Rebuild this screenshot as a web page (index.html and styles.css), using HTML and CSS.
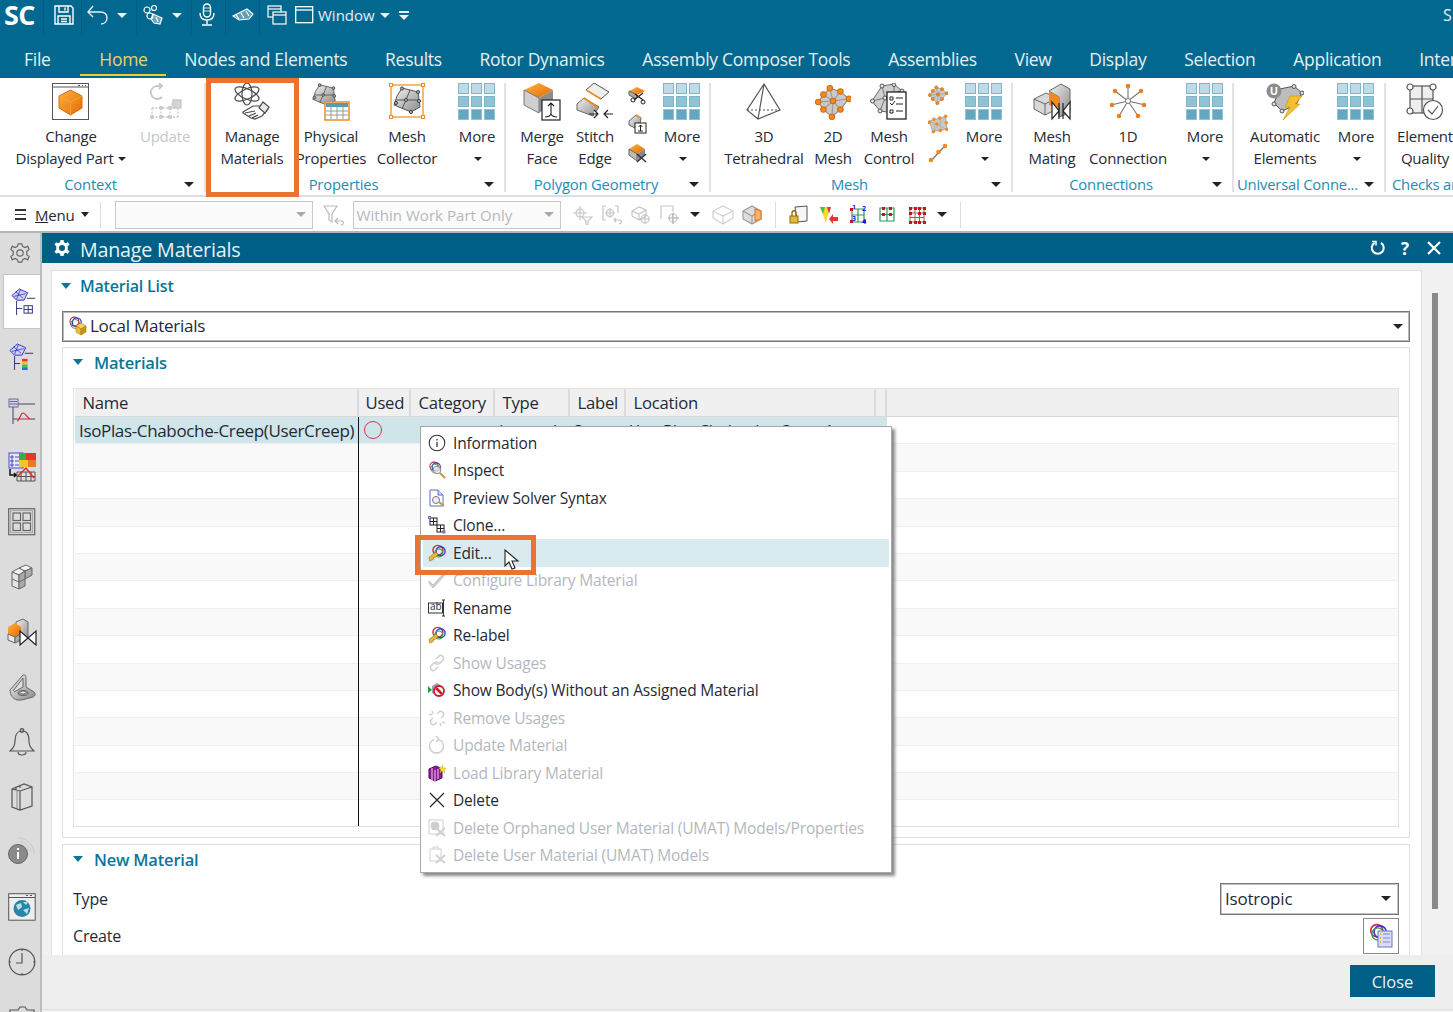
FILE: index.html
```html
<!DOCTYPE html>
<html lang="en">
<head>
<meta charset="utf-8">
<title>Manage Materials</title>
<link rel="stylesheet" href="styles.css">
</head>
<body>
<svg class="defs" aria-hidden="true">
  <defs>
    <linearGradient id="gOr" x1="0" y1="0" x2="1" y2="1"><stop offset="0" stop-color="#fdb23c"/><stop offset="1" stop-color="#e56a05"/></linearGradient>
    <linearGradient id="gGr" x1="0" y1="0" x2="1" y2="1"><stop offset="0" stop-color="#f2f2f2"/><stop offset="1" stop-color="#8a8a8a"/></linearGradient>
    <symbol id="grid" viewBox="0 0 38 38">
      <g fill="#bcdde8" stroke="#7fb7ca"><rect x=".5" y=".5" width="10" height="10"/><rect x="13.5" y=".5" width="10" height="10"/><rect x="26.5" y=".5" width="10" height="10"/></g>
      <g fill="#8fc2d4" stroke="#7fb7ca"><rect x=".5" y="13.5" width="10" height="10"/><rect x="13.5" y="13.5" width="10" height="10"/><rect x="26.5" y="13.5" width="10" height="10"/></g>
      <g fill="#63a8c0" stroke="#8fc2d4"><rect x=".5" y="26.5" width="10" height="10"/><rect x="13.5" y="26.5" width="10" height="10"/><rect x="26.5" y="26.5" width="10" height="10"/></g>
    </symbol>
    <symbol id="patch" viewBox="0 0 28 28">
      <path d="M9 2 25 6 27 21 18 26 1 19 4 10Z" fill="url(#gGr)" stroke="#555"/>
      <path d="M17 4 13 14 9 23M3 14 13 14 26 14" fill="none" stroke="#555"/>
      <g fill="#aaa" stroke="#444"><circle cx="9" cy="2.5" r="1.6"/><circle cx="25" cy="6" r="1.6"/><circle cx="13" cy="14" r="1.6"/><circle cx="26" cy="15" r="1.6"/><circle cx="18" cy="26" r="1.6"/><circle cx="3" cy="17" r="1.6"/></g>
    </symbol>
    <symbol id="orange-mesh" viewBox="0 0 34 34">
      <path d="M14 4 24 7 32 14 24 24 16 31 8 24 3 17 8 10Z" fill="#c9c9c9" stroke="#888"/>
      <path d="M14 4 17 16 16 31M3 17 17 16 32 14M8 10 17 16 24 24M24 7 17 16 8 24" fill="none" stroke="#999"/>
      <g fill="#f08a24" stroke="#d36d0c"><circle cx="14" cy="4" r="2.6"/><circle cx="24" cy="7" r="2.6"/><circle cx="32" cy="14" r="2.6"/><circle cx="24" cy="24" r="2.6"/><circle cx="16" cy="31" r="2.6"/><circle cx="8" cy="24" r="2.6"/><circle cx="3" cy="17" r="2.6"/><circle cx="8" cy="10" r="2.6"/><circle cx="17" cy="16" r="2.6"/></g>
    </symbol>
    <symbol id="tree-blue" viewBox="0 0 28 32">
      <path d="M1 9 9 2 18 6 14 14 6 14Z" fill="#cfd2f2" stroke="#2b2bc4"/>
      <path d="M5 5 13 12M10 3 6 13M3 10 16 7" stroke="#2b2bc4" fill="none" stroke-width=".8"/>
      <path d="M17 12H26M6 15V30M6 23H12" stroke="#2a2a6a" fill="none"/>
    </symbol>
    <symbol id="rings" viewBox="0 0 20 20">
      <circle cx="8" cy="7" r="5.5" fill="none" stroke="#c0304a" stroke-width="1.5"/>
      <circle cx="11" cy="8" r="5.5" fill="none" stroke="#3232c8" stroke-width="1.5"/>
      <circle cx="9" cy="10" r="5.5" fill="none" stroke="#3a9a4a" stroke-width="1.2"/>
    </symbol>
    <symbol id="key-rings" viewBox="0 0 20 20">
      <circle cx="11" cy="7" r="5.500" fill="none" stroke="#c0304a" stroke-width="1.600"/>
      <circle cx="14" cy="8" r="5" fill="none" stroke="#3232c8" stroke-width="1.500"/>
      <circle cx="12" cy="10" r="4.500" fill="none" stroke="#3a9a4a" stroke-width="1.200"/>
      <path d="M9 9 1 15 2 19 6 17 6 15 8 15 11 12Z" fill="#e8b83a" stroke="#9a7410" stroke-width=".7"/>
    </symbol>
  </defs>
</svg>

<div class="app">
  <header class="appbar">
    <div class="quick">
      <strong class="logo">SC</strong>
      <span class="qs"></span>
      <span class="q q-save"><svg width="22" height="22" viewBox="0 0 22 22" fill="none" stroke="#fff" stroke-width="1.4"><path d="M2 2H18L20 4V20H2Z"/><path d="M6 2V8H15V2M12 3.5V6.5M5 20V12H17V20M8 15H14M8 17.5H14"/></svg></span>
      <span class="qs"></span>
      <span class="q q-undo"><svg width="22" height="22" viewBox="0 0 22 22" fill="none" stroke="#e6f0f4" stroke-width="1.4"><path d="M1 8H13C18 8 20 11 20 14S18 20 14 20"/><path d="M6 2 1 8 6 13"/></svg></span>
      <i class="caret caret-w q-c1"></i>
      <span class="qs q-s2"></span>
      <span class="q q-tool"><svg width="22" height="22" viewBox="0 0 22 22" fill="none" stroke="#fff" stroke-width="1.2"><circle cx="5" cy="6" r="3"/><circle cx="12" cy="4" r="2.5"/><circle cx="8" cy="12" r="3"/><path d="M11 10 20 14 18 20 12 19 9 15Z" fill="#cfe0e8" fill-opacity=".5"/><path d="M14 13 16 18"/></svg></span>
      <i class="caret caret-w q-c1"></i>
      <span class="qs q-s3"></span>
      <span class="q q-mic"><svg width="18" height="24" viewBox="0 0 18 24" fill="none" stroke="#fff" stroke-width="1.4"><rect x="5.5" y="1" width="7" height="13" rx="3.5"/><path d="M2 10C2 15 5 17 9 17S16 15 16 10M9 17V21M4 22H14"/><path d="M6 5H12M6 8H12" stroke-width=".8"/></svg></span>
      <span class="qs q-s4"></span>
      <span class="q q-voice"><svg width="22" height="18" viewBox="0 0 22 18" fill="none" stroke="#fff" stroke-width="1.2"><path d="M1 10 15 3 21 8 17 13 7 14Z" fill="#bcd4de" fill-opacity=".5"/><path d="M9 7 12 12M14 5 17 10M4 9 7 13"/></svg></span>
      <span class="qs q-s5"></span>
      <span class="q q-win2"><svg width="20" height="20" viewBox="0 0 20 20" fill="none" stroke="#fff" stroke-width="1.2"><rect x="1" y="1" width="13" height="11" fill="#03688f"/><path d="M1 4H14"/><rect x="6" y="7" width="13" height="12" fill="#03688f"/><path d="M6 10H19"/></svg></span>
      <span class="q q-win"><svg width="19" height="18" viewBox="0 0 19 18" fill="none" stroke="#fff" stroke-width="1.3"><rect x=".7" y=".7" width="17" height="16"/><path d="M1 4H18"/></svg></span>
      <span class="q-label">Window</span>
      <i class="caret caret-w q-c2"></i>
      <span class="q-more"><i class="q-bar"></i><i class="caret caret-w"></i></span>
      <span class="q-end">S</span>
    </div>
    <nav class="tabs">
      <span class="tab">File</span>
      <span class="tab tab-on">Home</span>
      <span class="tab">Nodes and Elements</span>
      <span class="tab">Results</span>
      <span class="tab">Rotor Dynamics</span>
      <span class="tab">Assembly Composer Tools</span>
      <span class="tab">Assemblies</span>
      <span class="tab">View</span>
      <span class="tab">Display</span>
      <span class="tab">Selection</span>
      <span class="tab">Application</span>
      <span class="tab">Interop</span>
    </nav>
  </header>

  <section class="ribbon">
    <div class="group g-context">
      <div class="cols">
        <div class="tool">
          <svg class="ico" width="38" height="38" viewBox="0 0 38 38"><rect x=".5" y=".5" width="36" height="36" fill="#fff" stroke="#555"/><path d="M1 4H36" stroke="#555"/><path d="M26 2.5h2M30 2.5h1M33 2.5h1" stroke="#555"/><path d="M18.500 7 30 13V25L18.500 32 7 25V13Z" fill="url(#gOr)" stroke="#d9700e"/><path d="M7 13 18.500 19 30 13M18.500 19V32" fill="none" stroke="#f5a13a"/></svg>
          <span class="tool-l">Change<br>Displayed Part <i class="caret"></i></span>
        </div>
        <div class="tool off">
          <svg class="ico" width="38" height="38" viewBox="0 0 38 38" fill="none" stroke="#c8c8c8" stroke-width="1.3"><path d="M16 14A6.500 6.500 0 1 1 12 3L16 3M13 0 16 3 13 6" stroke-width="1.800"/><path d="M6 25H32M6 34H32M6 25V34M15 25V34M24 25V34M32 18V34M24 25 28 17H34" stroke-dasharray="2 1.500"/><g fill="#d5d5d5"><circle cx="15" cy="25" r="1.500"/><circle cx="24" cy="25" r="1.500"/><circle cx="6" cy="34" r="1.500"/><circle cx="15" cy="34" r="1.500"/><circle cx="24" cy="34" r="1.500"/><rect x="27" y="17" width="8" height="8"/></g></svg>
          <span class="tool-l">Update</span>
        </div>
      </div>
      <div class="foot"><span class="foot-l">Context</span><i class="caret foot-c"></i></div>
    </div>

    <div class="group g-props">
      <div class="cols">
        <div class="tool">
          <svg class="ico" width="38" height="38" viewBox="0 0 38 38" fill="none" stroke="#4a4a4a" stroke-width="1.200"><ellipse cx="14" cy="11" rx="13" ry="5" transform="rotate(25 14 11)"/><ellipse cx="14" cy="11" rx="13" ry="5" transform="rotate(-25 14 11)"/><ellipse cx="14" cy="11" rx="5" ry="11"/><path d="M10 29 20 23 27 23 31 20 35 26 29 33 22 36 18 35 10 30Z" fill="#fff"/><path d="M30 19 36 24 32 30 26 25Z" fill="#e8e8e8"/><path d="M12 30 22 28M16 33 23 30M19 35 25 32"/></svg>
          <span class="tool-l">Manage<br>Materials</span>
        </div>
        <div class="tool">
          <svg class="ico ico-wide" width="38" height="38" viewBox="0 0 38 38"><use href="#patch" x="0" y="0" width="24" height="24"/><rect x="13" y="19" width="24" height="18" fill="#fff" stroke="#f08a24" stroke-width="1.500"/><rect x="14" y="20" width="22" height="4" fill="#5a9ab4"/><path d="M14 28H36M14 32H36M19 24V36M25 24V36M31 24V36" stroke="#999"/></svg>
          <span class="tool-l">Physical<br>Properties</span>
        </div>
        <div class="tool">
          <svg class="ico" width="36" height="38" viewBox="0 0 36 38"><rect x="2" y="2" width="32" height="32" fill="none" stroke="#f08a24" stroke-width="1.200"/><g fill="#fff" stroke="#f08a24"><rect x=".5" y=".5" width="3" height="3"/><rect x="32.500" y=".5" width="3" height="3"/><rect x=".5" y="32.500" width="3" height="3"/><rect x="32.500" y="32.500" width="3" height="3"/></g><use href="#patch" x="4" y="3" width="28" height="28"/></svg>
          <span class="tool-l">Mesh<br>Collector</span>
        </div>
        <div class="tool"><svg class="ico" width="38" height="38"><use href="#grid"/></svg><span class="tool-l">More<br><i class="caret"></i></span></div>
      </div>
      <div class="foot"><span class="foot-l">Properties</span><i class="caret foot-c"></i></div>
    </div>

    <div class="group g-poly">
      <div class="cols">
        <div class="tool">
          <svg class="ico" width="38" height="38" viewBox="0 0 38 38"><path d="M16 0 30 7 16 15 1 7Z" fill="url(#gOr)"/><path d="M1 7 16 15V30L1 22Z" fill="#cfcfcf" stroke="#777"/><path d="M16 15 30 7V18L16 30Z" fill="#8d8d8d"/><rect x="19" y="17" width="18" height="20" fill="#fff" stroke="#222" stroke-width="1.200"/><path d="M28 20V31M25 23 28 20 31 23M22 34C25 34 27 33 28 31 29 33 31 34 34 34" fill="none" stroke="#222" stroke-width="1.100"/></svg>
          <span class="tool-l">Merge<br>Face</span>
        </div>
        <div class="tool">
          <svg class="ico" width="38" height="38" viewBox="0 0 38 38"><path d="M10 7 18 0 33 9 25 16Z" fill="#efefef" stroke="#555"/><path d="M10 7 25 16" stroke="#f08a24" stroke-width="1.500"/><path d="M1 21 8 15 23 24 17 33 1 27Z" fill="url(#gGr)" stroke="#666"/><path d="M8 15 21 24" stroke="#f08a24" stroke-width="2"/><path d="M13 31H21M18 27 22 31 18 35M37 31H29M32 27 28 31 32 35" fill="#fff" stroke="#222" stroke-width="1.200"/></svg>
          <span class="tool-l">Stitch<br>Edge</span>
        </div>
        <div class="tool mini-col">
          <svg width="20" height="20" viewBox="0 0 20 20"><path d="M2 6 10 2 18 6 10 10Z" fill="url(#gOr)"/><path d="M2 6 10 10 9 14 2 10Z" fill="#aaa" stroke="#666"/><path d="M8 9 16 15M16 8 7 15" stroke="#222" stroke-width="1.200"/><circle cx="6" cy="15" r="2" fill="none" stroke="#222"/><circle cx="16" cy="17" r="2" fill="none" stroke="#222"/></svg>
          <svg width="20" height="20" viewBox="0 0 20 20"><path d="M2 7 9 1 14 4 12 16 2 11Z" fill="url(#gGr)" stroke="#666"/><path d="M9 1 14 4" stroke="#f08a24" stroke-width="2"/><rect x="8" y="9" width="11" height="10" fill="#fff" stroke="#222"/><path d="M13.500 11V17M11 17H16M11.500 13 13.500 11 15.500 13" fill="none" stroke="#222"/></svg>
          <svg width="20" height="20" viewBox="0 0 20 20"><path d="M2 6 10 1 18 6 10 11Z" fill="url(#gOr)"/><path d="M2 6 10 11V18L2 12Z" fill="#bbb" stroke="#666"/><path d="M10 11 18 6V12L10 18Z" fill="#888"/><path d="M10 11 19 19M19 11 10 19" stroke="#333" stroke-width="1.500"/></svg>
        </div>
        <div class="tool"><svg class="ico" width="38" height="38"><use href="#grid"/></svg><span class="tool-l">More<br><i class="caret"></i></span></div>
      </div>
      <div class="foot"><span class="foot-l">Polygon Geometry</span><i class="caret foot-c"></i></div>
    </div>

    <div class="group g-mesh">
      <div class="cols">
        <div class="tool">
          <svg class="ico" width="38" height="38" viewBox="0 0 38 38" fill="none" stroke="#555" stroke-width="1.200"><path d="M19 1 2 27 13 36 35 27ZM19 1 13 36"/><path d="M2 27H35" stroke-dasharray="2 2"/></svg>
          <span class="tool-l">3D<br>Tetrahedral</span>
        </div>
        <div class="tool"><svg class="ico" width="36" height="38"><use href="#orange-mesh"/></svg><span class="tool-l">2D<br>Mesh</span></div>
        <div class="tool">
          <svg class="ico" width="38" height="38" viewBox="0 0 38 38"><path d="M12 3 24 1 32 8 24 30 10 28 2 18Z" fill="#cfcfcf" stroke="#666"/><path d="M12 3 15 15 10 28M2 18 15 15 24 10M24 1 24 10 32 8" fill="none" stroke="#777"/><g fill="#e5e5e5" stroke="#555"><circle cx="12" cy="3" r="2"/><circle cx="24" cy="1.800" r="1.800"/><circle cx="32" cy="8" r="2"/><circle cx="2.500" cy="18" r="2"/><circle cx="15" cy="15" r="2"/><circle cx="10" cy="28" r="2"/></g><rect x="17" y="9" width="19" height="27" fill="#fff" stroke="#222" stroke-width="1.300"/><path d="M20 14h3v3h-3zM20 20l2 2 3-4M20 27h3v3h-3zM26 15H33M26 21H33M26 28H33" fill="none" stroke="#222"/></svg>
          <span class="tool-l">Mesh<br>Control</span>
        </div>
        <div class="tool mini-col">
          <svg width="20" height="20"><use href="#orange-mesh"/></svg>
          <svg width="20" height="20" viewBox="0 0 34 34"><path d="M2 12 30 4 32 26 8 30Z" fill="#c9c9c9" stroke="#888"/><path d="M2 12 32 26M10 9 12 30M20 7 22 28M30 4 8 30" stroke="#aaa"/><g fill="#f08a24"><circle cx="2" cy="14" r="3"/><circle cx="10" cy="9" r="3"/><circle cx="20" cy="7" r="3"/><circle cx="30" cy="4" r="3"/><circle cx="31" cy="15" r="3"/><circle cx="32" cy="26" r="3"/><circle cx="21" cy="28" r="3"/><circle cx="9" cy="30" r="3"/><circle cx="15" cy="17" r="3"/></g></svg>
          <svg width="20" height="20" viewBox="0 0 20 20"><path d="M3 18 11 9 17 3" stroke="#777" stroke-width="1.300"/><g fill="#f08a24"><circle cx="3" cy="17" r="2.300"/><circle cx="10.500" cy="9" r="2.300"/><circle cx="17" cy="3" r="2.300"/></g></svg>
        </div>
        <div class="tool"><svg class="ico" width="38" height="38"><use href="#grid"/></svg><span class="tool-l">More<br><i class="caret"></i></span></div>
      </div>
      <div class="foot"><span class="foot-l">Mesh</span><i class="caret foot-c"></i></div>
    </div>

    <div class="group g-conn">
      <div class="cols">
        <div class="tool">
          <svg class="ico" width="38" height="38" viewBox="0 0 38 38"><path d="M1 16 13 10 24 15V26L12 32 1 26Z" fill="#d8d8d8" stroke="#666"/><path d="M1 16 12 21V32M12 21 24 15" fill="none" stroke="#666"/><path d="M16 8 28 1 37 6V30L26 34 26 14Z" fill="url(#gGr)" stroke="#666"/><path d="M16 8 26 14V26L16 22Z" fill="#f08a24"/><path d="M19 19V36L26 28ZM37 19V36L30 28ZM26 20V36M30 20V36" fill="#fff" stroke="#222" stroke-width="1.200"/></svg>
          <span class="tool-l">Mesh<br>Mating</span>
        </div>
        <div class="tool">
          <svg class="ico" width="36" height="38" viewBox="0 0 36 38"><path d="M18 18 18 3M18 18 5 8M18 18 31 8M18 18 1 22M18 18 35 22M18 18 9 33M18 18 28 33" stroke="#777" stroke-width="1.100"/><circle cx="18" cy="18" r="2.500" fill="#fff" stroke="#777"/><g fill="#f07f1a"><circle cx="18" cy="3" r="2.300"/><circle cx="5" cy="8" r="2.300"/><circle cx="31" cy="8" r="2.300"/><circle cx="2" cy="22" r="2.300"/><circle cx="34" cy="22" r="2.300"/><circle cx="9" cy="33" r="2.300"/><circle cx="28" cy="33" r="2.300"/></g></svg>
          <span class="tool-l">1D<br>Connection</span>
        </div>
        <div class="tool"><svg class="ico" width="38" height="38"><use href="#grid"/></svg><span class="tool-l">More<br><i class="caret"></i></span></div>
      </div>
      <div class="foot"><span class="foot-l">Connections</span><i class="caret foot-c"></i></div>
    </div>

    <div class="group g-univ">
      <div class="cols">
        <div class="tool">
          <svg class="ico" width="38" height="38" viewBox="0 0 38 38"><path d="M14 6 28 3 36 10 30 22 16 28 8 20Z" fill="#bdbdbd" stroke="#555"/><g fill="#ddd" stroke="#555"><circle cx="28" cy="3.500" r="2"/><circle cx="36" cy="10" r="2"/><circle cx="16" cy="28" r="2"/><circle cx="8" cy="21" r="2"/></g><circle cx="8" cy="8" r="7.500" fill="#8c8c8c"/><text x="8" y="12" class="svg-u">U</text><path d="M24 13H36L29 21H34L17 37 24 24H19Z" fill="#f5c02e" stroke="#c89410" stroke-width=".6"/></svg>
          <span class="tool-l">Automatic<br>Elements</span>
        </div>
        <div class="tool"><svg class="ico" width="38" height="38"><use href="#grid"/></svg><span class="tool-l">More<br><i class="caret"></i></span></div>
      </div>
      <div class="foot"><span class="foot-l">Universal Conne...</span><i class="caret foot-c"></i></div>
    </div>

    <div class="group g-check">
      <div class="cols">
        <div class="tool">
          <svg class="ico" width="38" height="38" viewBox="0 0 38 38" fill="none" stroke="#555" stroke-width="1.200"><rect x="4" y="3" width="23" height="27" fill="#eee"/><path d="M4 16H27M16 3V30"/><g fill="#fff"><circle cx="4" cy="4" r="3"/><circle cx="27" cy="4" r="3"/><circle cx="4" cy="28" r="3"/></g><circle cx="27" cy="27" r="9.500" fill="#fff"/><path d="M22 27 26 31 32 23"/></svg>
          <span class="tool-l">Element<br>Quality</span>
        </div>
      </div>
      <div class="foot"><span class="foot-l">Checks and Info</span></div>
    </div>
  </section>

  <section class="toolbar">
    <span class="burger"><i></i><i></i><i></i></span>
    <span class="menu-btn"><u>M</u>enu</span>
    <i class="caret tb-c1"></i>
    <span class="tb-sep tb-sep1"></span>
    <span class="tb-combo tb-combo1"><i class="caret caret-g"></i></span>
    <svg class="tb-filter" width="22" height="22" viewBox="0 0 22 22" fill="none" stroke="#bbb" stroke-width="1.200"><path d="M1 2H14L9 10V18L6 16V10Z"/><path d="M12 17H19C21 17 21 21 18 21M15 14 12 17 15 20"/></svg>
    <span class="tb-combo tb-combo2"><span>Within Work Part Only</span><i class="caret caret-g"></i></span>
    <span class="tb-icons tb-i1">
      <svg width="20" height="20" viewBox="0 0 20 20" fill="none" stroke="#c6c6c6" stroke-width="1.200"><circle cx="7" cy="8" r="4"/><path d="M7 1V15M0 8H14M9 12H19L15 16V20L13 19V16Z"/></svg>
      <svg width="20" height="20" viewBox="0 0 20 20" fill="none" stroke="#c6c6c6" stroke-width="1.200"><path d="M4 1H1V15H4M13 1H16V8"/><circle cx="8" cy="8" r="3.500"/><path d="M8 3V13M3 8H13M12 15H18C20 15 20 19 17 19M14 13 12 15 14 17"/></svg>
      <svg width="20" height="20" viewBox="0 0 20 20" fill="none" stroke="#c6c6c6" stroke-width="1.200"><path d="M1 6 8 2 15 5V11L8 15 1 11ZM1 6 8 9 15 5M8 9V15"/><circle cx="14" cy="14" r="4"/><path d="M14 9V19M9 14H19"/></svg>
      <svg width="20" height="20" viewBox="0 0 20 20" fill="none" stroke="#c6c6c6" stroke-width="1.200"><path d="M13 1H1V14"/><path d="M13 1V7"/><circle cx="13" cy="13" r="4"/><path d="M13 8V19M8 13H19" stroke="#a8a8a8"/></svg>
    </span>
    <i class="caret tb-c2"></i>
    <span class="tb-icons tb-i2">
      <svg width="22" height="20" viewBox="0 0 22 20" fill="none" stroke="#d0d0d0" stroke-width="1.200"><path d="M1 6 11 1 21 6V13L11 19 1 13ZM1 6 11 11 21 6M11 11V19"/></svg>
      <svg width="20" height="20" viewBox="0 0 20 20" fill="none" stroke="#999" stroke-width="1.100"><path d="M1 6 10 1 19 6V14L10 19 1 14Z" fill="#ddd"/><path d="M1 6 10 11V19M10 11 19 6"/><path d="M13 4V16L19 14V6Z" fill="#f3b07a" stroke="#e07a22"/></svg>
    </span>
    <span class="tb-sep tb-sep2"></span>
    <span class="tb-icons tb-i3">
      <svg width="20" height="20" viewBox="0 0 20 20"><path d="M6 2 18 1V16L8 17Z" fill="#f6f6f6" stroke="#555"/><rect x="1" y="11" width="8" height="7" fill="#e6b93a" stroke="#8e6a10"/><path d="M3 11V8C3 5 7 5 7 8V11" fill="none" stroke="#8e6a10" stroke-width="1.300"/></svg>
      <svg width="20" height="20" viewBox="0 0 20 20"><path d="M2 2H12L8 18Z" fill="#f6d92a"/><path d="M2 2H7L5 9Z" fill="#3fbf5a"/><path d="M9 2H13L11 9Z" fill="#e2382d"/><path d="M11 14 15 9 15 12H20V16H15V19Z" fill="#e2382d"/></svg>
      <svg width="20" height="20" viewBox="0 0 20 20"><path d="M4 4H16V17H4ZM10 4V17M4 10H16" fill="none" stroke="#2a9a5a" stroke-width="1.200"/><g fill="#c4161c"><rect x="2" y="3" width="3" height="3"/><rect x="2" y="15" width="3" height="3"/><rect x="15" y="15" width="3" height="3"/></g><text x="6" y="4" class="svg-n">1</text><text x="16" y="6" class="svg-n">2</text><text x="6" y="16" class="svg-n">3</text><text x="16" y="19" class="svg-n">4</text></svg>
      <svg width="20" height="20" viewBox="0 0 20 20"><path d="M3 3H17V16H3ZM10 3V16M3 9.500H17" fill="none" stroke="#2a9a5a" stroke-width="1.200"/><g fill="#c4161c"><rect x="5" y="2" width="3" height="3"/><rect x="12" y="2" width="3" height="3"/><rect x="5" y="8" width="3" height="3"/><rect x="12" y="8" width="3" height="3"/></g></svg>
      <svg width="20" height="20" viewBox="0 0 20 20"><path d="M3 3H17V17H3ZM8 3V17M12.500 3V17M3 8H17M3 12.500H17" fill="none" stroke="#a05a5a" stroke-width="1"/><g fill="#c4161c"><rect x="2" y="2" width="3" height="3"/><rect x="7" y="2" width="3" height="3"/><rect x="11" y="2" width="3" height="3"/><rect x="16" y="2" width="3" height="3"/><rect x="2" y="7" width="3" height="3"/><rect x="11" y="7" width="3" height="3"/><rect x="16" y="7" width="3" height="3"/><rect x="2" y="16" width="3" height="3"/><rect x="7" y="16" width="3" height="3"/><rect x="11" y="16" width="3" height="3"/><rect x="16" y="16" width="3" height="3"/></g></svg>
    </span>
    <i class="caret tb-c3"></i>
    <span class="tb-sep tb-sep3"></span>
  </section>

  <main class="workspace">
    <aside class="rail">
      <span class="rail-top"><svg width="20" height="20" viewBox="0 0 22 22" fill="none" stroke="#666" stroke-width="1.300"><path d="M9 1H13L14 4 16.500 5 19.500 3.500 21 7 18.500 9V13L21 15 19.500 18.500 16.500 17 14 18 13 21H9L8 18 5.500 17 2.500 18.500 1 15 3.500 13V9L1 7 2.500 3.500 5.500 5 8 4Z"/><circle cx="11" cy="11" r="3.500"/></svg></span>
      <span class="rail-i rail-on"><svg width="26" height="30" viewBox="0 0 28 32"><use href="#tree-blue"/><rect x="14" y="20" width="9" height="8" fill="none" stroke="#2a2a8a"/><path d="M18.500 20V28M14 24H23" stroke="#2a2a8a"/></svg></span>
      <span class="rail-i"><svg width="26" height="30" viewBox="0 0 28 32"><use href="#tree-blue"/><rect x="14" y="18" width="6" height="3" fill="#e2382d"/><rect x="14" y="21" width="6" height="3" fill="#f6c52a"/><rect x="14" y="24" width="6" height="3" fill="#3fbf5a"/><rect x="14" y="27" width="6" height="3" fill="#2a6ee2"/></svg></span>
      <span class="rail-i"><svg width="28" height="28" viewBox="0 0 28 28" fill="none"><rect x="1" y="1" width="9" height="8" fill="#cfd2e6" stroke="#6a6aa0"/><path d="M2 3.500H9M2 6H9" stroke="#6a6aa0"/><path d="M5 9V26M10 6H27M5 21H9M23 21H27" stroke="#444466"/><path d="M9 23C12 23 12 15 15 15S19 21 23 21H9" stroke="#c0303a" stroke-width="1.200"/></svg></span>
      <span class="rail-i"><svg width="28" height="30" viewBox="0 0 28 30"><rect x="1" y="1" width="14" height="15" fill="#e6e8f8" stroke="#4a4ac8"/><path d="M3 4h2v2h-2zM3 8h2v2h-2zM3 12h2v2h-2zM7 5H13M7 9H13M7 13H13" fill="none" stroke="#4a4ac8"/><path d="M11 1H18V8H11Z" fill="#3fa84a"/><path d="M18 1H28V8H18Z" fill="#e2382d"/><path d="M11 8H20V15H11Z" fill="#f2c52a"/><path d="M20 8H28V15H20Z" fill="#ea7a24"/><path d="M9 20H27V29H9ZM13 20V29M18 20V29M23 20V29M9 24.500H27" fill="none" stroke="#555"/><path d="M10 24 18 16 26 26" fill="none" stroke="#e2282d" stroke-width="1.500"/><path d="M2 17V23H8M6 21 8 23 6 25" fill="none" stroke="#111" stroke-width="1.500"/></svg></span>
      <span class="rail-i"><svg width="28" height="28" viewBox="0 0 28 28" fill="none" stroke="#666" stroke-width="1.200"><rect x=".7" y=".7" width="26" height="26"/><rect x="2.500" y="2.500" width="22" height="22" stroke="#aaa"/><rect x="5" y="5" width="7.500" height="7.500"/><rect x="15" y="5" width="7.500" height="7.500"/><rect x="5" y="15" width="7.500" height="7.500"/><rect x="15" y="15" width="7.500" height="7.500"/></svg></span>
      <span class="rail-i"><svg width="22" height="26" viewBox="0 0 22 26" stroke="#666"><path d="M1 8 8 4 14 7 8 11Z" fill="#f0f0f0"/><path d="M8 4 15 1 21 4 14 7Z" fill="#f5f5f5"/><path d="M14 7 21 4V11L14 15Z" fill="#aaa"/><path d="M1 8 8 11V25L1 22Z" fill="#e5e5e5"/><path d="M8 11 14 7V22L8 25Z" fill="#aaa"/><path d="M1 15 8 18 14 15" fill="none"/></svg></span>
      <span class="rail-i"><svg width="30" height="28" viewBox="0 0 30 28"><path d="M9 4 16 1 21 4V20L15 23 9 20Z" fill="url(#gGr)" stroke="#666"/><path d="M1 9 8 5 14 9V16L8 19 1 16Z" fill="url(#gOr)"/><path d="M1 16 8 19V25L1 22Z" fill="#e8e8e8" stroke="#666"/><path d="M8 19 14 16V22L8 25Z" fill="#aaa" stroke="#666"/><path d="M13 13V27L21 20ZM29 13V27L21 20Z" fill="#fff" stroke="#222" stroke-width="1.200"/></svg></span>
      <span class="rail-i"><svg width="28" height="28" viewBox="0 0 28 28" stroke="#666"><path d="M2 17 15 2C17 1 18 3 18 5V14L26 19C28 21 27 23 25 24L14 27H9C5 26 2 22 2 17Z" fill="url(#gGr)"/><path d="M5 18 15 5V14L6 19" fill="#ddd"/><ellipse cx="15" cy="20" rx="5" ry="2.500" fill="#999"/><ellipse cx="15" cy="19.500" rx="3" ry="1.500" fill="#eee"/></svg></span>
      <span class="rail-i"><svg width="26" height="28" viewBox="0 0 26 28" fill="none" stroke="#555" stroke-width="1.200"><path d="M13 3C7 3 6 8 6 13S4 20 1 23H25C22 20 20 18 20 13S19 3 13 3Z"/><circle cx="13" cy="2.500" r="1.800"/><path d="M9 24C9 28 17 28 17 24"/></svg></span>
      <span class="rail-i"><svg width="22" height="28" viewBox="0 0 22 28" fill="none" stroke="#555" stroke-width="1.200"><path d="M1 6 13 1 21 4V23L9 27 1 24ZM9 8V27M1 6 9 8 21 4M5 3.500 5 7M9 2 9 5"/><path d="M6 7V25" stroke="#999"/></svg></span>
      <span class="rail-i"><svg width="28" height="30" viewBox="0 0 28 30"><circle cx="10" cy="17" r="9.500" fill="#8a8a8a" stroke="#666"/><path d="M10 15V22M10 11V13" stroke="#fff" stroke-width="2"/><path d="M11 1C18 1 26 8 26 16M12 4C17 5 23 10 23 15M13 7C16 8 20 11 20 14" fill="none" stroke="#c8c8c8"/></svg></span>
      <span class="rail-i"><svg width="28" height="28" viewBox="0 0 28 28"><rect x=".7" y=".7" width="26.500" height="26.500" fill="#eee" stroke="#555"/><path d="M1 4.500H27M18 2.500h2M22 2.500h2" stroke="#555"/><circle cx="14" cy="15.500" r="8.500" fill="#2a86a8"/><path d="M8 12 13 10 14 14 10 17ZM15 17 21 15 19 21ZM15 9H20L18 12Z" fill="#bfe0ea"/></svg></span>
      <span class="rail-i"><svg width="28" height="28" viewBox="0 0 28 28" fill="none" stroke="#555" stroke-width="1.200"><circle cx="14" cy="14" r="12.800"/><path d="M14 5V15H8M14 1V3M14 25V27M1 14H3M25 14H27"/></svg></span>
      <span class="rail-i"><svg width="26" height="24" viewBox="0 0 26 24" fill="none" stroke="#555" stroke-width="1.200"><path d="M1 5H9L11 2H16L18 5H25V23H1ZM10 12H17M13.500 9V16"/></svg></span>
    </aside>

    <section class="dialog">
      <header class="dlg-head">
        <svg class="dlg-gear" width="16" height="16" viewBox="0 0 16 16"><path fill="#fff" fill-rule="evenodd" d="M6.500 0H9.500L10 2.300 11.800 3.200 14 2.200 15.500 4.800 13.700 6.300V9.700L15.500 11.200 14 13.800 11.800 12.800 10 13.700 9.500 16H6.500L6 13.700 4.200 12.800 2 13.800.5 11.200 2.300 9.700V6.300L.5 4.800 2 2.200 4.200 3.200 6 2.300ZM8 5A3 3 0 1 0 8 11 3 3 0 1 0 8 5Z"/></svg>
        <h1 class="dlg-title">Manage Materials</h1>
        <span class="dlg-actions">
          <svg width="16" height="16" viewBox="0 0 16 16" fill="none" stroke="#fff" stroke-width="2"><path d="M4.500 2.800A6 6 0 1 0 11 2.800"/><path d="M2 1.500H6V5.500" stroke-width="1.500"/></svg>
          <span class="help">?</span>
          <svg width="14" height="14" viewBox="0 0 14 14" stroke="#fff" stroke-width="2.200"><path d="M1 1 13 13M13 1 1 13"/></svg>
        </span>
      </header>
      <div class="dlg-body">
        <div class="scroll-area">
          <div class="outer">
            <h2 class="sec-h sec-h1"><i class="tri"></i>Material List</h2>
            <div class="list-combo">
              <svg width="20" height="20" viewBox="0 0 20 20"><use href="#rings" width="16" height="16"/><path d="M8 10 13 7 18 10 13 13Z" fill="#f7d45e" stroke="#a57f14" stroke-width=".6"/><path d="M8 10 13 13V19L8 16Z" fill="#f0bc35" stroke="#a57f14" stroke-width=".6"/><path d="M13 13 18 10V16L13 19Z" fill="#c89418" stroke="#a57f14" stroke-width=".6"/></svg>
              <span class="list-combo-t">Local Materials</span>
              <i class="caret"></i>
            </div>
            <div class="panel panel-mat">
              <h2 class="sec-h sec-h2"><i class="tri"></i>Materials</h2>
              <div class="table">
                <div class="t-row t-head">
                  <span>Name</span><span>Used</span><span>Category</span><span>Type</span><span>Label</span><span>Location</span><span></span><span></span>
                </div>
                <div class="t-row t-sel"><span>IsoPlas-Chaboche-Creep(UserCreep)</span><span><i class="used"></i></span><span></span><span>Isotropic</span><span>3</span><span>\Iso-Plas-Chaboche-Creep1</span><span></span></div>
                <div class="t-row"><span></span></div><div class="t-row"><span></span></div><div class="t-row"><span></span></div><div class="t-row"><span></span></div>
                <div class="t-row"><span></span></div><div class="t-row"><span></span></div><div class="t-row"><span></span></div><div class="t-row"><span></span></div>
                <div class="t-row"><span></span></div><div class="t-row"><span></span></div><div class="t-row"><span></span></div><div class="t-row"><span></span></div>
                <div class="t-row"><span></span></div><div class="t-row"><span></span></div>
              </div>
            </div>
            <div class="panel panel-new">
              <h2 class="sec-h sec-h2"><i class="tri"></i>New Material</h2>
              <div class="form-row form-type"><span>Type</span><span class="type-combo"><span>Isotropic</span><i class="caret"></i></span></div>
              <div class="form-row form-create"><span>Create</span>
                <span class="create-btn"><svg width="28" height="28" viewBox="0 0 28 28"><use href="#rings" width="22" height="22" x="1" y="1"/><rect x="11" y="9" width="14" height="16" fill="#d8dcf8" stroke="#6a74c0"/><path d="M13 12h1M13 16h1M13 20h1" stroke="#e0b020" stroke-width="2"/><path d="M16 12H23M16 16H23M16 20H23" stroke="#8088c8"/></svg></span>
              </div>
            </div>
          </div>
          <div class="scrollbar"><i></i></div>
        </div>
        <footer class="dlg-foot"><span class="close-btn">Close</span></footer>
      </div>
    </section>
  </main>
</div>

<div class="context-menu">
  <div class="mi"><svg width="18" height="18" viewBox="0 0 18 18" fill="none" stroke="#333" stroke-width="1.100"><circle cx="9" cy="9" r="7.800"/><path d="M9 8V13M9 5V6.500" stroke-width="1.300"/></svg><span>Information</span></div>
  <div class="mi"><svg width="18" height="18" viewBox="0 0 18 18"><use href="#rings" width="15" height="15"/><circle cx="9" cy="9" r="3.800" fill="#eef" fill-opacity=".7" stroke="#888"/><path d="M12 12 17 17" stroke="#c09a40" stroke-width="2"/></svg><span>Inspect</span></div>
  <div class="mi"><svg width="18" height="18" viewBox="0 0 18 18"><path d="M2 1H10L15 6V17H2Z" fill="#fff" stroke="#5a6ec8"/><path d="M10 1V6H15" fill="#cfd6f5" stroke="#5a6ec8"/><circle cx="8" cy="11" r="3.500" fill="#eef" stroke="#777"/><path d="M11 13 16 17" stroke="#c09a40" stroke-width="2"/></svg><span>Preview Solver Syntax</span></div>
  <div class="mi"><svg width="18" height="18" viewBox="0 0 18 18" fill="none" stroke="#222"><rect x="2" y="2" width="7" height="7"/><path d="M5.500 2V9M2 5.500H9"/><rect x="9" y="9" width="7" height="7"/><path d="M12.500 9V16M9 12.500H16"/><g stroke="#7070c0"><rect x=".5" y=".5" width="2" height="2"/><rect x="15" y="15" width="2" height="2"/></g></svg><span>Clone...</span></div>
  <div class="mi mi-on"><svg width="18" height="18"><use href="#key-rings"/></svg><span>Edit...</span></div>
  <div class="mi mi-off"><svg width="18" height="18" viewBox="0 0 18 18"><path d="M1 10 5 14 16 2 17 4 5 17 1 12Z" fill="#cfcfcf" stroke="#c4c4c4"/></svg><span>Configure Library Material</span></div>
  <div class="mi"><svg width="18" height="18" viewBox="0 0 18 18" fill="none" stroke="#333"><rect x=".5" y="4" width="14" height="10"/><path d="M14 1H17M15.500 1V17M14 17H17" /></svg><span class="mi-abs">ab</span><span>Rename</span></div>
  <div class="mi"><svg width="18" height="18"><use href="#key-rings"/></svg><span>Re-label</span></div>
  <div class="mi mi-off"><svg width="18" height="18" viewBox="0 0 18 18" fill="none" stroke="#cfcfcf" stroke-width="1.400"><path d="M8 5 11 2C13 0 17 3 15 6L12 9C10 11 8 10 7 9"/><path d="M10 13 7 16C5 18 1 15 3 12L6 9C8 7 10 8 11 9"/></svg><span>Show Usages</span></div>
  <div class="mi"><svg width="18" height="18" viewBox="0 0 18 18"><path d="M0 5 4 9 0 12Z" fill="#19a13a"/><path d="M4 5 9 2 14 5V12L9 15 4 12Z" fill="#9aa0b0"/><circle cx="11" cy="10" r="5" fill="#fff" stroke="#c81e2a" stroke-width="1.800"/><path d="M8 7 14 13" stroke="#c81e2a" stroke-width="2.600"/></svg><span>Show Body(s) Without an Assigned Material</span></div>
  <div class="mi mi-off"><svg width="18" height="18" viewBox="0 0 18 18" fill="none" stroke="#cfcfcf" stroke-width="1.400"><path d="M9 5 11 3C13 1 17 4 15 7L13 9M9 13 7 15C5 17 1 14 3 11L5 9M4 2 5 5M1 5 4 6M14 13 17 14M12 14 13 17"/></svg><span>Remove Usages</span></div>
  <div class="mi mi-off"><svg width="18" height="18" viewBox="0 0 18 18" fill="none" stroke="#cfcfcf" stroke-width="1.400"><path d="M11 3.500A7 7 0 1 1 6 3.500"/><path d="M8 0 11 3.500 8 6"/></svg><span>Update Material</span></div>
  <div class="mi"><svg width="18" height="18" viewBox="0 0 18 18"><path d="M1 5 8 2 14 5V14L7 17 1 14Z" fill="#8e1a96" stroke="#4e0a56"/><path d="M4 4V16M7 6V17M10 5V15" stroke="#f0d0f0"/><path d="M14 1 15 4 18 4 16 6 17 9 14 7 12 9 13 6 11 4 14 4Z" fill="#f3e02a" stroke="#c8b010" stroke-width=".5"/></svg><span class="mi-dim">Load Library Material</span></div>
  <div class="mi"><svg width="18" height="18" viewBox="0 0 18 18" stroke="#222" stroke-width="1.200"><path d="M2 2 16 16M16 2 2 16"/></svg><span>Delete</span></div>
  <div class="mi mi-off"><svg width="18" height="18" viewBox="0 0 18 18" fill="none" stroke="#d0d0d0"><rect x="1" y="1" width="14" height="14"/><circle cx="7" cy="7" r="4" fill="#cfcfcf"/><path d="M8 9 17 17M17 9 8 17" stroke-width="1.800"/></svg><span>Delete Orphaned User Material (UMAT) Models/Properties</span></div>
  <div class="mi mi-off"><svg width="18" height="18" viewBox="0 0 18 18" fill="none" stroke="#d0d0d0"><path d="M2 3H13V15H2ZM5 3V1H10V3"/><path d="M8 9 17 17M17 9 8 17" stroke-width="1.800"/></svg><span>Delete User Material (UMAT) Models</span></div>
</div>

<div class="hl hl-ribbon"></div>
<div class="hl hl-edit"></div>
<svg class="pointer" width="16" height="22" viewBox="0 0 16 22"><path d="M1 1V17L5 13 8 20 11 19 8 12H14Z" fill="#fff" stroke="#222" stroke-width="1.100"/></svg>
</body>
</html>
```

FILE: styles.css
```css
* { box-sizing: border-box; }
html, body { margin: 0; height: 100%; overflow: hidden; background: #fff; }
body { font-family: "Open Sans", "Noto Sans", sans-serif; color: #1f2a36; position: relative; }
svg { display: block; flex: none; }
.defs { position: absolute; width: 0; height: 0; }
i { display: block; }
.svg-u { font: 700 11px "Open Sans", sans-serif; fill: #fff; text-anchor: middle; }
.svg-n { font: 700 7px "Open Sans", sans-serif; fill: #1414e0; text-anchor: middle; }

.app { display: flex; flex-direction: column; height: 100vh; }

.caret { width: 0; height: 0; border-left: 5px solid transparent; border-right: 5px solid transparent; border-top: 5px solid #222; flex: none; }
.caret-w { border-top-color: #e8f2f5; }
.caret-g { border-top-color: #aaa; }

/* app bar */
.appbar { background: #03688f; height: 78px; flex: none; color: #e4f0f4; }
.quick { height: 30px; display: flex; align-items: center; position: relative; }
.logo { font-size: 27px; font-weight: 700; color: #fff; width: 43px; padding-left: 4px; letter-spacing: -.5px; line-height: 30px; flex: none; white-space: nowrap; }
.qs { width: 1px; height: 34px; background: #005d82; align-self: flex-start; flex: none; }
.q { flex: none; display: flex; }
.q-save { margin: 0 6px 0 9px; }
.q-undo { margin: 0 8px 0 5px; }
.q-c1 { margin-right: 9px; }
.q-tool { margin: 0 8px 0 5px; }
.q-mic { margin: 0 9px 0 6px; }
.q-voice { margin: 0 5px 0 6px; }
.q-win2 { margin: 0 8px 0 7px; }
.q-win { margin-right: 4px; }
.q-label { font-size: 15px; margin-right: 5px; }
.q-c2 { margin-right: 9px; }
.q-more { display: flex; flex-direction: column; gap: 2px; }
.q-bar { width: 10px; height: 2px; background: #e8f2f5; }
.q-end { margin-left: auto; font-size: 16px; flex: none; width: 10px; }

.tabs { height: 48px; display: flex; align-items: center; padding: 10px 0 0 24px; gap: 37.700px; white-space: nowrap; position: relative; }
.tab { font-size: 17.500px; line-height: 30px; flex: none; letter-spacing: -.28px; }
.tab-on { color: #e8d36a; position: relative; margin-left: 11px; margin-right: -1px; }
.tab-on::after { content: ""; position: absolute; left: -19px; right: -18px; bottom: -2px; height: 2px; background: #f0cc2e; }

/* ribbon */
.ribbon { height: 119px; flex: none; display: flex; padding: 5px 0 3px; border-bottom: 2px solid #dfdfdf; background: #fff; overflow: hidden; }
.group { display: flex; flex-direction: column; border-right: 2px solid #e2e2e2; flex: none; }
.cols { display: grid; height: 94px; }
.g-context { width: 206px; }
.g-context .cols { grid-template-columns: 142px 46px; }
.g-props { width: 300px; }
.g-props .cols { padding-left: 1px; grid-template-columns: 90px 68px 84px 56px; }
.g-poly { width: 205px; }
.g-poly .cols { grid-template-columns: 72px 34px 50px 40px; }
.g-mesh { width: 302px; }
.g-mesh .cols { padding-left: 9px; grid-template-columns: 88px 50px 62px 36px 56px; }
.g-conn { width: 221px; }
.g-conn .cols { padding-left: 12px; grid-template-columns: 54px 98px 56px; }
.g-univ { width: 152px; }
.g-univ .cols { padding-left: 8px; grid-template-columns: 86px 56px; }
.g-check { width: 78px; border-right: 0; }
.g-check .cols { grid-template-columns: 78px; }

.tool { display: flex; flex-direction: column; align-items: center; min-width: 0; }
.tool .ico { height: 38px; margin-bottom: 4px; }
.tool-l { font-size: 15px; line-height: 22px; letter-spacing: -.2px; text-align: center; white-space: nowrap; color: #1f2a36; }
.tool-l .caret { display: inline-block; vertical-align: middle; margin: 0 0 2px 1px; border-width: 4.500px 4.500px 0; }
.off .tool-l { color: #c4c8cc; }
.mini-col { gap: 9px; justify-content: flex-start; padding-top: 2px; }

.foot { height: 16px; display: flex; align-items: center; }
.foot-l { flex: 1; min-width: 0; text-align: center; font-size: 14.800px; letter-spacing: -.2px; color: #1d8db5; white-space: nowrap; line-height: 16px; }
.foot-c { width: 0; margin: 0 10px 0 3px; }
.g-check .foot-l { text-align: left; padding-left: 6px; }

/* toolbar */
.toolbar { height: 36px; flex: none; display: flex; align-items: center; background: #fff; border-bottom: 2px solid #b5b5b5; padding-top: 1px; }
.burger { display: flex; flex-direction: column; gap: 3px; margin-left: 15px; flex: none; }
.burger i { width: 11px; height: 1.500px; background: #333; }
.menu-btn { font-size: 15px; margin-left: 9px; letter-spacing: -.2px; }
.tb-c1 { margin-left: 6px; border-width: 5px 4px 0; }
.tb-sep { width: 1px; height: 26px; background: #dcdcdc; flex: none; }
.tb-sep1 { margin-left: 11px; }
.tb-combo { height: 28px; border: 1px solid #c8c8c8; display: flex; align-items: center; justify-content: space-between; background: #fbfbfb; flex: none; }
.tb-combo1 { width: 198px; margin-left: 14px; padding: 0 6px 0 0; justify-content: flex-end; }
.tb-combo2 { width: 208px; margin-left: 8px; padding: 0 6px 0 3px; font-size: 15px; color: #b4b8bc; letter-spacing: .05px; }
.tb-filter { margin-left: 10px; }
.tb-icons { display: flex; flex: none; align-items: center; }
.tb-i1 { margin-left: 12px; gap: 9px; }
.tb-c2 { margin-left: 10px; }
.tb-i2 { margin-left: 12px; gap: 8px; }
.tb-sep2 { margin-left: 13px; }
.tb-i3 { margin-left: 13px; gap: 9.500px; }
.tb-c3 { margin-left: 10px; }
.tb-sep3 { margin-left: 13px; }

/* workspace */
.workspace { flex: 1; min-height: 0; display: flex; }
.rail { width: 42px; flex: none; background: #dcdcdc; border-right: 2px solid #bdbdbd; display: flex; flex-direction: column; overflow: hidden; }
.rail-top { height: 41px; flex: none; display: flex; align-items: center; justify-content: center; padding: 0 1px 1px 0; }
.rail-i { height: 55px; flex: none; display: flex; align-items: center; justify-content: center; padding-left: 4px; }
.rail-on { background: #fff; margin-left: 3px; margin-right: -2px; padding-left: 1px; border: 1px solid #c4c4c4; border-right: 0; }

.dialog { flex: 1; min-width: 0; display: flex; flex-direction: column; background: #f1f1f1; }
.dlg-head { height: 30px; flex: none; background: #005f87; color: #fff; display: flex; align-items: center; padding: 0 12px 0 12px; }
.dlg-gear { margin-right: 10px; }
.dlg-title { margin: 0; padding-top: 3px; font-size: 19.700px; font-weight: 400; letter-spacing: -.2px; color: #e8f3f6; line-height: 30px; }
.dlg-actions { margin-left: auto; display: flex; align-items: center; gap: 15px; }
.help { font-weight: 700; font-size: 17px; line-height: 17px; width: 11px; }
.dlg-body { flex: 1; min-height: 0; display: flex; flex-direction: column; }
.scroll-area { height: 692px; flex: none; display: flex; overflow: hidden; padding: 7px 0 0 9px; }
.outer { width: 1371px; flex: none; background: #fff; border: 1px solid #e1e1e1; padding: 0 11px 0 10px; height: 720px; }
.scrollbar { flex: 1; position: relative; padding: 23px 0 0 10px; }
.scrollbar i { width: 6px; height: 616px; background: #8a8a8a; }

.sec-h { margin: 0; font-size: 16px; font-weight: 600; letter-spacing: -.2px; color: #0b7698; display: flex; align-items: center; }
.tri { width: 0; height: 0; border-left: 5px solid transparent; border-right: 5px solid transparent; border-top: 6px solid #0b7698; flex: none; }
.sec-h1 { height: 30px; gap: 9px; margin-left: -1px; }
.sec-h2 { height: 30px; gap: 11px; font-size: 16.500px; padding-bottom: 2px; }
.list-combo { height: 31px; margin-top: 10px; border: 1px solid #777; box-shadow: inset 0 0 0 1px #bbb; display: flex; align-items: center; padding: 0 6px 2px 5px; font-size: 17px; }
.list-combo .caret { margin-top: 2px; }
.list-combo-t { margin-left: 2px; flex: 1; letter-spacing: -.25px; }
.panel { border: 1px solid #e0e0e0; margin-top: 6px; }
.list-combo + .panel { margin-top: 5px; }
.panel-mat { height: 491px; padding: 0 10px; }
.panel-new { height: 140px; padding: 0 10px; }
.table { height: 439px; margin-top: 10px; border: 1px solid #e2e2e2; padding: 0 0 0 1px; overflow: hidden; }
.t-row { height: 27.400px; display: grid; grid-template-columns: 284px 52px 84px 75px 56px 250px 11px 1fr; font-size: 16.700px; letter-spacing: -.25px; line-height: 27px; white-space: nowrap; border-bottom: 1px solid #efefef; }
.t-row:nth-child(odd) { background: #f9f9f9; }
.t-row > span { min-width: 0; padding-left: 4px; overflow: hidden; }
.t-row:not(.t-head) > span:first-child { border-right: 1px solid #111; height: 27.400px; }
.t-head.t-row { background: #f0f0f0; height: 28px; line-height: 27px; border-bottom: 1px solid #d8d8d8; }
.t-head > span { border-right: 2px solid #dcdcdc; padding-left: 7.500px; }
.t-head > span:last-child { border-right: 0; }
.t-head > span:nth-child(2) { padding-left: 6.500px; }
.t-sel.t-row { background: linear-gradient(to right, #cfe5ea 812px, #fff 812px); }
.t-sel > span:first-child { padding-left: 4px; font-size: 17px; letter-spacing: -.35px; }
.used { width: 18px; height: 18px; border: 1.500px solid #e0304a; border-radius: 50%; margin: 4px 0 0 1px; }
.form-row { display: flex; justify-content: space-between; font-size: 16px; letter-spacing: -.2px; }
.form-type { align-items: center; height: 32px; margin-top: 8px; }
.type-combo { width: 179px; height: 32px; border: 1px solid #777; box-shadow: inset 0 0 0 1px #c4c4c4; display: flex; align-items: center; justify-content: space-between; padding: 0 7px 1px 4px; font-size: 17px; }
.form-create { align-items: center; height: 36px; margin-top: 3px; }
.create-btn { width: 36px; height: 36px; border: 1px solid #888; display: flex; align-items: center; justify-content: center; background: #fff; }
.dlg-foot { flex: none; height: 55px; background: #eee; border-bottom: 1px solid #ddd; display: flex; justify-content: flex-end; align-items: center; padding: 0 18px 2px 0; position: relative; z-index: 1; }
.close-btn { width: 85px; height: 32px; background: #005f87; color: #e8f3f6; font-size: 16.500px; display: flex; align-items: center; justify-content: center; }

/* overlays */
.context-menu { position: absolute; left: 420px; top: 426px; width: 472px; height: 447px; background: #fff; border: 1px solid #a8a8a8; box-shadow: 3px 3px 3px #8a8a8a; padding: 2px 2px; font-size: 15.500px; letter-spacing: -.17px; }
.mi { height: 27.500px; display: flex; align-items: center; padding-left: 5px; gap: 7px; position: relative; color: #1f2a36; white-space: nowrap; line-height: 20px; }
.mi-on { background: #daebef; }
.mi-off, .mi-dim { color: #b3b8bf; }
.mi-abs { position: absolute; left: 7px; top: 7px; font-size: 10px; line-height: 11px; letter-spacing: 0; }
.hl { position: absolute; border: 5px solid #ea7334; pointer-events: none; }
.hl-ribbon { left: 206px; top: 78px; width: 93px; height: 119px; }
.hl-edit { left: 415px; top: 535px; width: 121px; height: 40px; }
.pointer { position: absolute; left: 504px; top: 549px; }
```
